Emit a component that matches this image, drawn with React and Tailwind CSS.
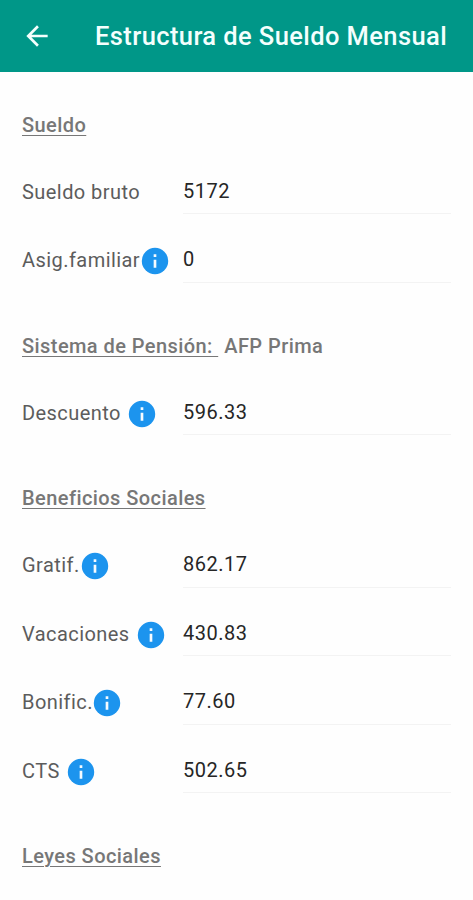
import React from 'react';

const sections = [
  {
    title: 'Sueldo',
    height: 'h-[73.5px]',
    rows: [
      { label: 'Sueldo bruto', value: '5172' },
      { label: 'Asig.familiar', value: '0', info: 'ml-[2px]' },
    ],
  },
  {
    title: 'Sistema de Pensión:\u00a0',
    extra: 'AFP Prima',
    height: 'h-[84px]',
    rows: [{ label: 'Descuento', value: '596.33', info: 'ml-2' }],
  },
  {
    title: 'Beneficios Sociales',
    height: 'h-[84px]',
    rows: [
      { label: 'Gratif.', value: '862.17', info: 'ml-[1.5px]' },
      { label: 'Vacaciones', value: '430.83', info: 'ml-2' },
      { label: 'Bonific.', value: '77.60', info: 'ml-[1px]' },
      { label: 'CTS', value: '502.65', info: 'ml-[7.5px]' },
    ],
  },
  { title: 'Leyes Sociales', height: 'h-[84px]', rows: [] },
];

const BackIcon = () => (
  <svg viewBox="0 0 24 24" className="size-8" fill="#f4fffd">
    <path d="M20 11H7.83l5.59-5.59L12 4l-8 8 8 8 1.41-1.41L7.83 13H20v-2z" />
  </svg>
);

const InfoIcon = () => (
  <svg viewBox="0 0 24 24" className="size-8 -m-[2.6px] shrink-0">
    <circle cx="12" cy="12" r="9.9" fill="#1c94ee" />
    <path d="M11 11h2v6h-2zM11 7h2v2h-2z" fill="#f5fbff" />
  </svg>
);

const Row = ({ label, value, info }) => (
  <div className="flex h-[68.5px] items-end">
    <div className="flex h-[45px] w-[161px] shrink-0 items-center">
      <span className="whitespace-nowrap tracking-[0.44px] text-[#5c5c5c]">{label}</span>
      {info && (
        <span className={`mt-[2px] flex ${info}`}>
          <InfoIcon />
        </span>
      )}
    </div>
    <div className="flex h-[46px] w-[268px] items-center border-b border-[#f3f3f3] text-[#262626] tracking-[0.5px]">
      {value}
    </div>
  </div>
);

const Section = ({ title, extra, height, rows }) => (
  <section>
    <div className={`flex items-end pb-[9px] font-medium text-[#777777] tracking-[0.43px] ${height}`}>
      <h2 className="leading-6 underline decoration-1 underline-offset-[3px]">{title}</h2>
      {extra && <span className="ml-1.5 leading-6">{extra}</span>}
    </div>
    {rows.map((row) => (
      <Row key={row.label} {...row} />
    ))}
  </section>
);

const App = () => {
  return (
    <div className="h-[900px] w-[473px] overflow-hidden bg-[#fefefe] font-['Roboto',sans-serif] text-[20px] leading-6">
      <header className="flex h-[72px] items-center bg-[#009788] pl-[21px]">
        <BackIcon />
        <h1 className="mb-px ml-[42px] whitespace-nowrap text-[25.5px] font-medium tracking-[0.4px] text-[#f4fffd]">
          Estructura de Sueldo Mensual
        </h1>
      </header>
      <main className="px-[22px]">
        {sections.map((section) => (
          <Section key={section.title} {...section} />
        ))}
      </main>
    </div>
  );
};

export default App;
